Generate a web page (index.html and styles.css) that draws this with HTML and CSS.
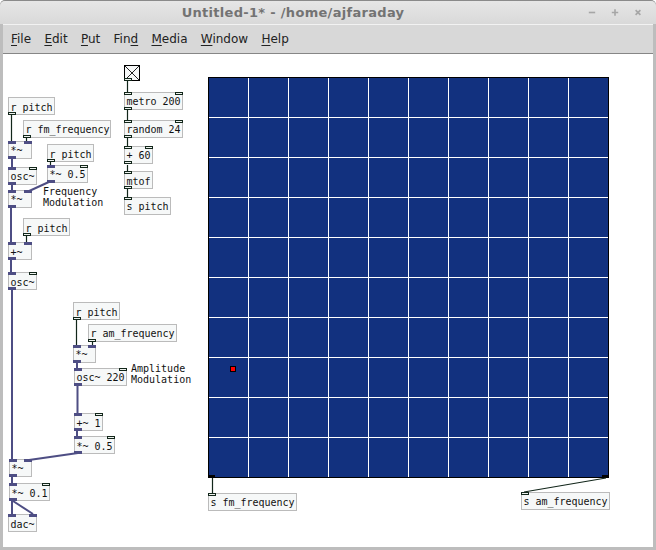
FILE: index.html
```html
<!DOCTYPE html>
<html lang="en">
<head>
<meta charset="utf-8">
<title>Untitled-1* - /home/ajfaraday</title>
<link rel="stylesheet" href="styles.css">
</head>
<body>
<div class="window">
  <header class="titlebar">
    <span class="title">Untitled-1* - /home/ajfaraday</span>
    <div class="controls">
      <svg class="ctl" viewBox="0 0 10 10"><path d="M1 5h8" /></svg>
      <svg class="ctl" viewBox="0 0 10 10"><path d="M1 5h8M5 1v8" /></svg>
      <svg class="ctl" viewBox="0 0 10 10"><path d="M2 2l6 6M8 2l-6 6" /></svg>
    </div>
  </header>
  <nav class="menubar">
    <span class="menu"><u>F</u>ile</span>
    <span class="menu"><u>E</u>dit</span>
    <span class="menu"><u>P</u>ut</span>
    <span class="menu">Fin<u>d</u></span>
    <span class="menu"><u>M</u>edia</span>
    <span class="menu"><u>W</u>indow</span>
    <span class="menu"><u>H</u>elp</span>
  </nav>
  <main class="canvas">
    <div class="array">
      <i class="pt"></i>
      <b class="array-out array-out-l"></b>
      <b class="array-out array-out-r"></b>
    </div>

    <svg class="wires" width="656" height="550" viewBox="0 0 656 550">
      <g class="ctrl">
        <path d="M11.500 115V141M26.500 137V141M50.500 162V165M127.500 81V92M127.500 109V120M127.500 137V147M127.500 165V171M127.500 189V197M26.500 236V242M76.500 320V345M92.500 342V345M212.500 478V493M606 478L524 492"/>
      </g>
      <g class="sig">
        <path d="M12 159V167M12 185V190M51 181L27 192M11 207V242M11 260V272M12 290V459M77 362V368M77.500 385V413M77 431V436M78 453L29 460M12 477V483M12 501V514M13 501L33 514"/>
      </g>
    </svg>

    <div class="obj low o-rp1">r pitch<b class="c o1"></b></div>
    <div class="obj o-rfm">r fm_frequency<b class="c o1"></b></div>
    <div class="obj o-m1">*~<b class="s i1"></b><b class="s i2"></b><b class="s o1"></b></div>
    <div class="obj low o-rp2">r pitch<b class="c o1"></b></div>
    <div class="obj o-m05">*~ 0.5<b class="s i1"></b><b class="c ir"></b><b class="s o1"></b></div>
    <div class="obj o-osc1">osc~<b class="s i1"></b><b class="c ir"></b><b class="s o1"></b></div>
    <div class="obj o-m2">*~<b class="s i1"></b><b class="s i2"></b><b class="s o1"></b></div>
    <div class="label l-fm">Frequency<br>Modulation</div>
    <div class="obj low o-rp3">r pitch<b class="c o1"></b></div>
    <div class="obj low o-plus">+~<b class="s i1"></b><b class="s i2"></b><b class="s o1"></b></div>
    <div class="obj low o-osc2">osc~<b class="s i1"></b><b class="c ir"></b><b class="s o1"></b></div>

    <div class="bang"><svg viewBox="0 0 14 14"><path d="M0 0L14 14M14 0L0 14"/></svg><b class="c o1"></b></div>
    <div class="obj o-metro">metro 200<b class="c i1"></b><b class="c ir"></b><b class="c o1"></b></div>
    <div class="obj o-rand">random 24<b class="c i1"></b><b class="c ir"></b><b class="c o1"></b></div>
    <div class="obj o-p60">+ 60<b class="c i1"></b><b class="c ir"></b><b class="c o1"></b></div>
    <div class="obj low o-mtof">mtof<b class="c i1"></b><b class="c o1"></b></div>
    <div class="obj o-spitch">s pitch<b class="c i1"></b></div>

    <div class="obj low o-rp4">r pitch<b class="c o1"></b></div>
    <div class="obj o-ram">r am_frequency<b class="c o1"></b></div>
    <div class="obj o-m3">*~<b class="s i1"></b><b class="s i2"></b><b class="s o1"></b></div>
    <div class="obj o-osc3">osc~ 220<b class="s i1"></b><b class="c ir"></b><b class="s o1"></b></div>
    <div class="label l-am">Amplitude<br>Modulation</div>
    <div class="obj low o-p1">+~ 1<b class="s i1"></b><b class="c ir"></b><b class="s o1"></b></div>
    <div class="obj low o-m4">*~ 0.5<b class="s i1"></b><b class="c ir"></b><b class="s o1"></b></div>
    <div class="obj o-m5">*~<b class="s i1"></b><b class="s i2"></b><b class="s o1"></b></div>
    <div class="obj low o-m6">*~ 0.1<b class="s i1"></b><b class="c ir"></b><b class="s o1"></b></div>
    <div class="obj low o-dac">dac~<b class="s i1"></b><b class="s ir"></b></div>

    <div class="obj o-sfm">s fm_frequency<b class="c i1"></b></div>
    <div class="obj o-sam">s am_frequency<b class="c i1"></b></div>
  </main>
</div>
</body>
</html>
```
FILE: styles.css
```css
* { box-sizing: border-box; }
html, body { margin: 0; padding: 0; }
body { width: 656px; height: 550px; overflow: hidden; background: #fff; }

.window {
  width: 656px;
  height: 550px;
  display: flex;
  flex-direction: column;
  background: #bdbdbd;
  border-top: 1px solid #8a8a8a;
  border-radius: 5px 5px 0 0;
  padding: 0 3px 3px;
}

.titlebar {
  height: 23px;
  flex: none;
  margin: 0 -3px;
  padding: 0 10px 0 0;
  display: flex;
  align-items: center;
  justify-content: flex-end;
  position: relative;
  background: linear-gradient(#e6e6e6, #d9d9d9);
  border-radius: 5px 5px 0 0;
}
.title {
  position: absolute;
  left: 0;
  right: 70px;
  top: 3px;
  text-align: center;
  font: bold 13px/17px "DejaVu Sans", sans-serif;
  letter-spacing: 0.3px;
  color: #737373;
}
.controls { display: flex; gap: 15px; margin-right: 4px; }
.ctl { width: 8px; height: 9px; overflow: visible; }
.ctl path { fill: none; stroke: #a6a6a6; stroke-width: 2; }

.menubar {
  height: 30px;
  flex: none;
  display: flex;
  gap: 13.3px;
  align-items: center;
  padding: 0 0 0 8px;
  background: #d8d8d8;
  border-top: 1px solid #f2f2f2;
  border-bottom: 1px solid #868686;
  font: 12px/16px "DejaVu Sans", sans-serif;
  color: #222;
}
.menu u { text-underline-offset: 2px; }

.canvas {
  flex: 1;
  position: relative;
  background: #fff;
  overflow: hidden;
}

/* Everything inside .canvas sits on a free patch canvas; origin is (3,54) on the page */
.array {
  position: absolute;
  left: 205px;
  top: 23px;
  width: 401px;
  height: 401px;
  border: 1px solid #000;
  background-color: #12317f;
  background-image:
    repeating-linear-gradient(90deg, transparent 0 39px, #fff 39px 40px),
    repeating-linear-gradient(180deg, transparent 0 39px, #fff 39px 40px);
}
.pt {
  position: absolute;
  left: 21px;
  top: 288px;
  width: 6px;
  height: 6px;
  background: #f00;
  border: 1px solid #000;
}
.array-out { position: absolute; bottom: -1px; height: 3px; width: 7px; background: #000; }
.array-out-l { left: -1px; }
.array-out-r { right: -1px; }

.wires { position: absolute; left: -3px; top: -54px; pointer-events: none; }
.wires path { fill: none; }
.ctrl path { stroke: #12261a; stroke-width: 1.2; }
.sig path { stroke: #4e4e84; stroke-width: 2; }

.obj {
  position: absolute;
  height: 18px;
  padding: 0 0 0 1.5px;
  background: #f6f8f8;
  border: 1px solid #bbb;
  font: 10px/18px "DejaVu Sans Mono", monospace;
  letter-spacing: -0.03px;
  color: #111;
  white-space: pre;
}
.low { line-height: 20px; }
.label {
  position: absolute;
  font: 10px/11px "DejaVu Sans Mono", monospace;
  color: #111;
  white-space: pre;
}

.c, .s { position: absolute; width: 8px; height: 3px; }
.c { background: #eef2ee; border: 1px solid #12261a; }
.s { background: #4e4e84; }
.i1 { left: -1px; top: -1px; }
.i2 { right: -1px; top: -1px; }
.ir { right: -1px; top: -1px; }
.o1 { left: -1px; bottom: -1px; }

.bang {
  position: absolute;
  left: 121px;
  top: 11px;
  width: 16px;
  height: 16px;
  background: #f6f8f8;
  border: 1px solid #000;
}
.bang svg { display: block; width: 14px; height: 14px; }
.bang path { stroke: #222; stroke-width: 1; fill: none; }

.o-rp1 { left: 5px; top: 43px; width: 47px; }
.o-rfm { left: 20px; top: 66px; width: 88px; }
.o-m1 { left: 5px; top: 87px; width: 24px; }
.o-rp2 { left: 44px; top: 90px; width: 47px; }
.o-m05 { left: 44px; top: 111px; width: 41px; }
.o-osc1 { left: 5px; top: 113px; width: 29px; }
.o-m2 { left: 5px; top: 136px; width: 24px; }
.l-fm { left: 40px; top: 132px; }
.o-rp3 { left: 20px; top: 164px; width: 47px; }
.o-plus { left: 5px; top: 188px; width: 24px; }
.o-osc2 { left: 5px; top: 218px; width: 29px; }

.o-metro { left: 121px; top: 38px; width: 59px; }
.o-rand { left: 121px; top: 66px; width: 59px; }
.o-p60 { left: 121px; top: 92px; width: 29px; }
.o-mtof { left: 121px; top: 117px; width: 29px; }
.o-spitch { left: 121px; top: 143px; width: 47px; }

.o-rp4 { left: 70px; top: 248px; width: 47px; }
.o-ram { left: 85px; top: 270px; width: 89px; }
.o-m3 { left: 70px; top: 291px; width: 23px; }
.o-osc3 { left: 71px; top: 314px; width: 53px; }
.l-am { left: 128px; top: 309px; }
.o-p1 { left: 71px; top: 359px; width: 29px; }
.o-m4 { left: 71px; top: 382px; width: 41px; }
.o-m5 { left: 6px; top: 405px; width: 23px; }
.o-m6 { left: 6px; top: 429px; width: 41px; }
.o-dac { left: 5px; top: 460px; width: 29px; }

.o-sfm { left: 205px; top: 439px; width: 89px; }
.o-sam { left: 518px; top: 438px; width: 89px; }
```
